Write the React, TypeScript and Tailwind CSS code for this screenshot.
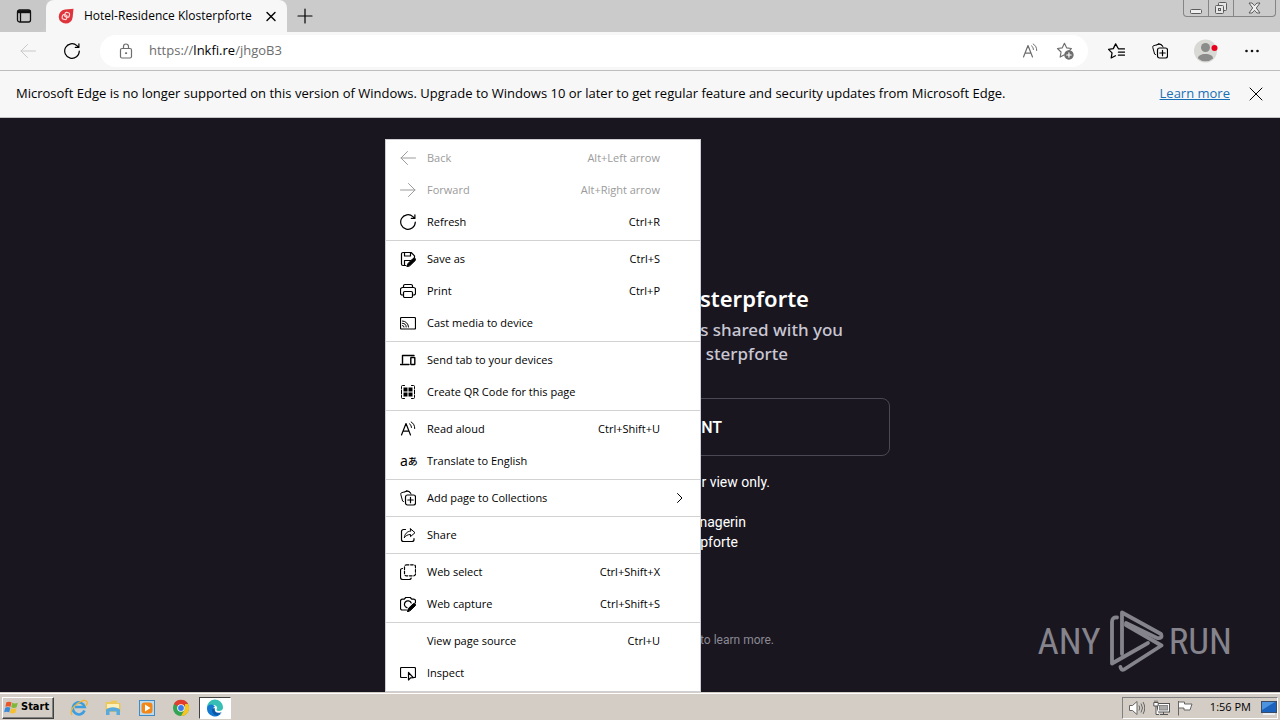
import React from "react";

const MENU_FONT = "font-['Open_Sans','Liberation_Sans',sans-serif]";

function Svg({ size = 16, className = "", children }: { size?: number; className?: string; children: React.ReactNode }) {
  return (
    <svg width={size} height={size} viewBox="0 0 16 16" fill="none" stroke="currentColor" strokeWidth="1" strokeLinecap="round" strokeLinejoin="round" aria-hidden="true" className={"shrink-0 " + className}>
      {children}
    </svg>
  );
}

const icons = {
  back: <path d="M7.500 1.500L1 8l6.500 6.500M1 8h14.500" />,
  forward: <path d="M8.500 1.500L15 8l-6.500 6.500M15 8H.5" />,
  refresh: <path d="M15.300 8A7.300 7.300 0 1 1 12.900 2.600l1.900 1.700M14.900.8v3.600h-3.600" strokeWidth="1.200" />,
  save: (
    <>
      <path d="M6 14.500H3a1.500 1.500 0 0 1-1.500-1.500V3A1.500 1.500 0 0 1 3 1.500h8.200L14.500 4.800V6.500M4.500 1.500V5h6V1.500M4.500 14V9.500h6" strokeWidth="1.200" />
      <path d="M7 15.500l1-3L13 7.500a1.400 1.400 0 0 1 2.200 2.100L10 14.600z" fill="currentColor" />
    </>
  ),
  print: (
    <>
      <path d="M3.500 12H2.300A1.800 1.800 0 0 1 .5 10.200V6.500a2 2 0 0 1 2-2h11a2 2 0 0 1 2 2v3.700a1.800 1.800 0 0 1-1.800 1.800h-1.200M3.500 4.500V3A1.500 1.500 0 0 1 5 1.500h6A1.500 1.500 0 0 1 12.500 3v1.500" strokeWidth="1.200" />
      <rect x="3.500" y="8.500" width="9" height="6" rx="1.200" strokeWidth="1.200" />
    </>
  ),
  cast: (
    <>
      <rect x=".5" y="2.500" width="15" height="11.500" rx="1" strokeWidth="1.200" />
      <path d="M2.500 6a6 6 0 0 1 6 6M2.500 8.300A3.700 3.700 0 0 1 6.200 12M2.500 10.500A1.500 1.500 0 0 1 4 12" />
    </>
  ),
  send: (
    <>
      <path d="M2.500 11V3.500H14M.5 12.500h8.500" strokeWidth="1.400" />
      <rect x="10.800" y="5.500" width="4" height="7" rx=".5" strokeWidth="1.400" />
    </>
  ),
  qr: (
    <>
      <path d="M1.500 4.500V2.500a1 1 0 0 1 1-1h2M11.500 1.500h2a1 1 0 0 1 1 1v2M14.500 11.500v2a1 1 0 0 1-1 1h-2M4.500 14.500h-2a1 1 0 0 1-1-1v-2M1.500 6v4M14.500 6v4" />
      <path d="M3.500 3.500h4v4h-4zM8.500 3.500h4v4h-4zM3.500 8.500h4v4h-4zM8.500 8.500h4v4h-4z" fill="currentColor" stroke="none" />
    </>
  ),
  read: (
    <>
      <path d="M1.500 14L6 2.500 10.500 14M3 10.200h6" strokeWidth="1.200" />
      <path d="M9.500 2.800a4 4 0 0 1 2 3.700M11.200 1a7 7 0 0 1 3.500 6.500" />
    </>
  ),
  collections: (
    <>
      <path d="M3.500 11.500L2.600 11.100 .8 4.500A1.500 1.500 0 0 1 1.900 2.600L7.500 1.100a1.500 1.500 0 0 1 1.900 1.200M5 2l1-1.300 4 1.300 1 2" />
      <rect x="5.500" y="5" width="10" height="10" rx="2" strokeWidth="1.200" />
      <path d="M10.500 7.300v5.400M7.800 10h5.400" strokeWidth="1.200" />
    </>
  ),
  share: (
    <>
      <path d="M5.500 2.500H3.500a2 2 0 0 0-2 2v8a2 2 0 0 0 2 2h8.500a2 2 0 0 0 2-2v-1" strokeWidth="1.200" />
      <path d="M10.500 1.800L15 5.700l-4.500 3.900V7.500C7.600 7.500 5.700 8.700 4.300 10.800c.4-3.600 2.500-6.500 6.200-6.700z" />
    </>
  ),
  select: (
    <>
      <path d="M2.500 4.500h-.2A1.800 1.800 0 0 0 .5 6.300v6.900a2.300 2.300 0 0 0 2.300 2.300h6.400a2 2 0 0 0 2-1.500" strokeWidth="1.200" />
      <rect x="4.500" y=".8" width="11" height="11" rx="1.800" strokeDasharray="2.600 1.700" strokeWidth="1.200" />
    </>
  ),
  capture: (
    <>
      <path d="M6.500 14H2.300A1.800 1.800 0 0 1 .5 12.200V5a1.800 1.800 0 0 1 1.800-1.800h2L5.700 1.500h4.600l1.400 1.700h2A1.800 1.800 0 0 1 15.500 5v1.500M7 11.700A3.500 3.500 0 1 1 11.200 7" strokeWidth="1.200" />
      <path d="M7.500 15.500l.8-3L13.300 7.700a1.300 1.300 0 0 1 2 2L10.300 14.500z" fill="currentColor" />
    </>
  ),
  inspect: (
    <>
      <path d="M6.500 12.500h-5a1 1 0 0 1-1-1V3.500a1 1 0 0 1 1-1h13a1 1 0 0 1 1 1v8a1 1 0 0 1-1 1h-1" strokeWidth="1.200" />
      <path d="M8.500 7.500v7.500l2-2.200 2.800-.1z" strokeWidth="1.200" />
    </>
  ),
};

type Item = { label: string; icon?: React.ReactNode; keys?: string; disabled?: boolean; sub?: boolean };

const groups: Item[][] = [
  [
    { label: "Back", icon: <Svg>{icons.back}</Svg>, keys: "Alt+Left arrow", disabled: true },
    { label: "Forward", icon: <Svg>{icons.forward}</Svg>, keys: "Alt+Right arrow", disabled: true },
    { label: "Refresh", icon: <Svg>{icons.refresh}</Svg>, keys: "Ctrl+R" },
  ],
  [
    { label: "Save as", icon: <Svg>{icons.save}</Svg>, keys: "Ctrl+S" },
    { label: "Print", icon: <Svg>{icons.print}</Svg>, keys: "Ctrl+P" },
    { label: "Cast media to device", icon: <Svg>{icons.cast}</Svg> },
  ],
  [
    { label: "Send tab to your devices", icon: <Svg>{icons.send}</Svg> },
    { label: "Create QR Code for this page", icon: <Svg>{icons.qr}</Svg> },
  ],
  [
    { label: "Read aloud", icon: <Svg>{icons.read}</Svg>, keys: "Ctrl+Shift+U" },
    { label: "Translate to English", icon: <span className="flex items-center whitespace-nowrap font-['Noto_Sans','Noto_Sans_CJK_JP',sans-serif] text-[14px] leading-4"><span>a</span><span className="text-[10px] font-medium">あ</span></span> },
  ],
  [{ label: "Add page to Collections", icon: <Svg>{icons.collections}</Svg>, sub: true }],
  [{ label: "Share", icon: <Svg>{icons.share}</Svg> }],
  [
    { label: "Web select", icon: <Svg>{icons.select}</Svg>, keys: "Ctrl+Shift+X" },
    { label: "Web capture", icon: <Svg>{icons.capture}</Svg>, keys: "Ctrl+Shift+S" },
  ],
  [
    { label: "View page source", keys: "Ctrl+U" },
    { label: "Inspect", icon: <Svg>{icons.inspect}</Svg> },
  ],
];

function ContextMenu() {
  return (
    <div role="menu" className={"absolute left-[385px] top-[21px] z-10 w-[316px] border border-[#cfcfd3] bg-white py-0.5 text-[11px] text-black " + MENU_FONT}>
      {groups.map((group, g) => (
        <div key={g} className={g > 0 ? "mt-0.5 border-t border-[#d2d2d2] pt-0.5" : ""}>
          {group.map((item) => (
            <button key={item.label} role="menuitem" disabled={item.disabled} className={"flex h-8 w-full items-center pl-3.5 pr-2 text-left " + (item.disabled ? "text-[#9b9b9b]" : "")}>
              <span className="flex w-[27px] shrink-0">{item.icon}</span>
              <span className="flex-1">{item.label}</span>
              <span>{item.keys}</span>
              <span className="flex w-8 shrink-0 justify-end pr-1">
                {item.sub && (
                  <Svg>
                    <path d="M5.500 3.500L10 8l-4.500 4.500" />
                  </Svg>
                )}
              </span>
            </button>
          ))}
        </div>
      ))}
    </div>
  );
}

function TitleBar() {
  return (
    <div className="flex h-8 items-stretch bg-[#cbcbcb]">
      <button aria-label="Tab actions" className="flex w-[46px] items-center justify-center rounded-br-lg bg-[#c8c8c8]">
        <svg width="16" height="16" viewBox="0 0 16 16" fill="none" stroke="#111" strokeWidth="1.300" className="ml-0.5">
          <rect x="1.500" y="2" width="13" height="12" rx="2" />
          <path d="M1.500 3.700h13" strokeWidth="3" />
          <path d="M4.500 5v9" />
        </svg>
      </button>
      <div className="flex w-[241px] items-center rounded-t-lg bg-[#f7f7f7] pl-3 pr-2">
        <svg width="16" height="16" viewBox="0 0 16 16" className="mr-2.5 shrink-0">
          <path d="M15.500.8L14.700 9A7 7 0 1 1 7 1.600z" fill="#e0343c" />
          <g fill="none" stroke="#ffd9d9" strokeWidth="1.200">
            <rect x="6.800" y="4.500" width="4.600" height="4.600" rx="1.500" transform="rotate(12 9 7)" />
            <rect x="4.300" y="6.900" width="4.600" height="4.600" rx="1.500" transform="rotate(12 7 9)" />
          </g>
        </svg>
        <span className="flex-1 whitespace-nowrap text-[12px] text-black">Hotel-Residence Klosterpforte</span>
        <button aria-label="Close tab" className="text-black">
          <Svg>
            <path d="M4 4.500l8 8M12 4.500l-8 8" strokeWidth="1.400" />
          </Svg>
        </button>
      </div>
      <button aria-label="New tab" className="flex w-9 items-center justify-center text-black">
        <Svg>
          <path d="M8 1v14M1 8h14" strokeWidth="1.200" />
        </Svg>
      </button>
      <div className="flex-1" />
      <div className="mr-1 flex h-[17px] rounded-b-[4px] border border-t-0 border-[#858585] text-[#5c5c5c]">
        <button aria-label="Minimize" className="flex w-[25px] items-end justify-center border-r border-[#858585] pb-0.5">
          <svg width="12" height="5" viewBox="0 0 12 5" fill="#eee" stroke="currentColor"><rect x=".5" y=".5" width="11" height="4" rx="1" /></svg>
        </button>
        <button aria-label="Restore" className="flex w-[25px] items-center justify-center border-r border-[#858585]">
          <svg width="14" height="14" viewBox="0 0 14 14" fill="#e6e6e6" stroke="currentColor">
            <rect x="4.500" y="1.500" width="8" height="8" rx="1" />
            <rect x="1.500" y="4.500" width="8" height="8" rx="1" />
            <rect x="4.500" y="7.500" width="2" height="2" />
          </svg>
        </button>
        <button aria-label="Close window" className="flex w-[41px] items-center justify-center">
          <svg width="13" height="12" viewBox="0 0 13 12" fill="#eee" stroke="currentColor">
            <path d="M1 1h3l2.500 2.700L9 1h3L8.300 6l3.700 5H9L6.500 8.300 4 11H1l3.700-5z" />
          </svg>
        </button>
      </div>
    </div>
  );
}

const STAR = "M7.500 1.200l1.900 4 4.300.6-3.100 3.100M7.500 1.200l-1.900 4-4.300.6 3.200 3.100-.8 4.500 3.400-1.900";

function Toolbar() {
  return (
    <div className="flex h-[39px] items-center border-b border-[#bdbdbd] bg-[#f7f7f7] text-[#222]">
      <button aria-label="Back" disabled className="ml-5 text-[#c9c9c9]"><Svg>{icons.back}</Svg></button>
      <button aria-label="Refresh page" className="ml-7 text-black"><Svg>{icons.refresh}</Svg></button>
      <div className="ml-5 flex h-8 flex-1 items-center rounded-full bg-white pl-[18px] pr-3.5 text-[#6d6d6d]">
        <Svg>
          <rect x="2.500" y="5.500" width="11" height="9.500" rx="1.500" strokeWidth="1.200" />
          <path d="M5.500 5.500V3.500a2.500 2.500 0 0 1 5 0v2" strokeWidth="1.200" />
          <circle cx="8" cy="10.200" r=".6" fill="currentColor" />
        </Svg>
        <a href="https://lnkfi.re/jhgoB3" className="ml-[15px] flex-1 text-[13px]">
          https://<span className="text-black">lnkfi.re</span>/jhgoB3
        </a>
        <button aria-label="Read aloud"><Svg>{icons.read}</Svg></button>
        <button aria-label="Add to favorites" className="ml-[18px]">
          <Svg size={18}>
            <path d={STAR} />
            <circle cx="11.500" cy="11.500" r="3.700" fill="currentColor" />
            <path d="M11.500 9.500v4M9.500 11.500h4" stroke="#fff" />
          </Svg>
        </button>
      </div>
      <div className="ml-5 mr-5 flex items-center text-black">
        <button aria-label="Favorites">
          <Svg size={17}><path d="M9.500 5L7.200.8 5 5.300.5 6l3.300 3.300-.8 4.800L7 12M9.800 5.500h5.700M9.800 8.500h5.700M9.800 11.500h5.700" strokeWidth="1.200" /></Svg>
        </button>
        <button aria-label="Collections" className="ml-[27px]"><Svg>{icons.collections}</Svg></button>
        <button aria-label="Profile" className="ml-[26px]">
          <svg width="24" height="24" viewBox="0 0 24 24">
            <circle cx="11.500" cy="12" r="11.500" fill="#d8d8d5" />
            <circle cx="11.500" cy="8.500" r="4.500" fill="#8b8b8b" />
            <path d="M4 19.500c0-3 3-4.500 7.500-4.500s7.500 1.500 7.500 4.500a11.300 11.300 0 0 1-15 0z" fill="#8b8b8b" />
            <circle cx="20.500" cy="9" r="3" fill="#e8001c" />
          </svg>
        </button>
        <button aria-label="Settings and more" className="ml-[26px]">
          <svg width="16" height="16" viewBox="0 0 16 16" fill="#111">
            <circle cx="2.500" cy="8" r="1.300" />
            <circle cx="8" cy="8" r="1.300" />
            <circle cx="13.500" cy="8" r="1.300" />
          </svg>
        </button>
      </div>
    </div>
  );
}

function InfoBar() {
  return (
    <div className="flex h-[47px] items-center border-b border-[#c4c4c4] bg-[#f7f7f7] pl-4 pr-4 text-[13px] text-black">
      <p className="flex-1 whitespace-nowrap">
        Microsoft Edge is no longer supported on this version of Windows. Upgrade to Windows 10 or later to get regular feature and security updates from Microsoft Edge.
      </p>
      <a href="#learn-more" className="text-[#1a6fb5] underline">Learn more</a>
      <button aria-label="Dismiss" className="ml-[18px]"><Svg><path d="M2 2l12 12M14 2L2 14" /></Svg></button>
    </div>
  );
}

function Watermark() {
  return (
    <div className="absolute bottom-5 right-12 flex items-center text-[#85838b]">
      <span className="font-['Roboto_Condensed','Liberation_Sans_Narrow','Roboto',sans-serif] text-[37px] leading-none">ANY</span>
      <svg width="56" height="62" viewBox="0 0 56 62" fill="none" stroke="currentColor" strokeWidth="3.800" strokeLinejoin="round" strokeLinecap="round" className="ml-2 mr-1">
        <path d="M8 7.500Q3 7 3 12v41.500L39 33" />
        <path d="M13 44V2.500L52 24q2 5-4 4L17 13" />
        <path d="M17 15l35.500 20.500L15 59.500q-3 1-3.500-2.500" />
      </svg>
      <span className="font-['Roboto_Condensed','Liberation_Sans_Narrow','Roboto',sans-serif] text-[37px] leading-none">RUN</span>
    </div>
  );
}

function Page() {
  return (
    <main className="relative flex flex-1 justify-center bg-[#191620] pr-1 text-right font-['Roboto','Noto_Sans',sans-serif] text-white">
      <div className="w-[504px] pt-[164px]">
        <h1 className="pr-[81px] font-['Noto_Sans',sans-serif] text-[22px] font-semibold leading-8">sterpforte</h1>
        <p className="pr-[47px] pt-1 font-['Noto_Sans',sans-serif] text-[17px] font-medium leading-6 text-[#c9c7d3]">s shared with you</p>
        <p className="pr-[102px] font-['Noto_Sans',sans-serif] text-[17px] font-medium leading-6 text-[#c9c7d3]">sterpforte</p>
        <button className="mt-8 block h-[58px] w-full rounded-lg border border-[#4a4852] pr-[167px] pt-0.5 text-right text-[16px] font-medium">NT</button>
        <p className="pr-[120px] pt-4 text-[14px] leading-5">r view only.</p>
        <p className="pr-[144px] pt-5 text-[14px] leading-5">nagerin</p>
        <p className="pr-[152px] text-[14px] leading-5">pforte</p>
        <p className="pr-[116px] pt-[78px] text-[12px] leading-5 text-[#8b8993]">to learn more.</p>
      </div>
      <ContextMenu />
      <Watermark />
    </main>
  );
}

function Taskbar() {
  return (
    <footer className="flex h-7 items-center border-t border-[#d4cdc5] bg-[#d4cdc5] pb-0.5 pl-0.5 pr-0.5 text-[11px] text-black shadow-[inset_0_1px_0_#fff]">
      <button className="mt-1 flex h-[22px] w-[52px] items-center gap-0.5 whitespace-nowrap border border-b-[#404040] border-l-white border-r-[#404040] border-t-white pl-px font-['DejaVu_Sans_Condensed','DejaVu_Sans',sans-serif] text-[11px] font-bold shadow-[inset_-1px_-1px_0_#808080]">
        <svg width="15" height="15" viewBox="0 0 16 16" className="shrink-0">
          <path d="M2.500 2.500q2.500-1.500 5.500 0L7 7.300q-2.700-1.400-5.500 0z" fill="#e8562a" />
          <path d="M8.700 3q2.800 1.300 6 0l-1.200 4.800q-3 1.300-5.800 0z" fill="#7fb83a" />
          <path d="M1.300 8.200q2.700-1.400 5.500 0l-1.200 4.900q-2.700-1.400-5.500 0z" fill="#3b8ad8" />
          <path d="M7.500 8.700q2.800 1.300 5.800 0l-1.200 4.900q-3 1.300-5.800 0z" fill="#f5bf2e" />
        </svg>
        Start
      </button>
      <nav aria-label="Pinned programs" className="ml-4 mt-1 flex items-center">
        <button aria-label="Internet Explorer" className="w-[34px]">
          <svg width="18" height="18" viewBox="0 0 18 18" fill="none">
            <path d="M14.500 11.500a6 6 0 1 1 .2-3.500H5" stroke="#3b9ee0" strokeWidth="2.600" />
            <path d="M2 16Q-1 11 7 5t10-2q1 1-1.500 4" stroke="#edb53a" strokeWidth="1.300" />
          </svg>
        </button>
        <button aria-label="File Explorer" className="w-[34px]">
          <svg width="18" height="18" viewBox="0 0 18 18">
            <path d="M1.500 3h5l1-1.500H13V4h3.500v9h-15z" fill="#ecc75c" />
            <path d="M3 5h12v4H3z" fill="#fbf0bb" />
            <path d="M2 10.500q7-4.500 14 0V16h-3.500v-3.500h-7V16H2z" fill="#58aade" />
          </svg>
        </button>
        <button aria-label="Media Player" className="w-[34px]">
          <svg width="18" height="18" viewBox="0 0 18 18">
            <rect x="1.500" y="1.500" width="15" height="15" fill="#bcdaf0" stroke="#3f8bc4" />
            <rect x="3.500" y="3.500" width="11" height="11" rx="3" fill="#f28718" />
            <path d="M7 5.500v7L12.500 9z" fill="#fff" />
          </svg>
        </button>
        <button aria-label="Chrome" className="w-[34px]">
          <svg width="18" height="18" viewBox="0 0 18 18">
            <circle cx="9" cy="9" r="8" fill="#34a353" />
            <path d="M9 9L2 5A8 8 0 0 1 16 5z" fill="#e33b2e" />
            <path d="M9 17l4-7V5h3A8 8 0 0 1 9 17z" fill="#f9c51c" />
            <circle cx="9" cy="9" r="3.800" fill="#fff" />
            <circle cx="9" cy="9" r="2.900" fill="#3e79e8" />
          </svg>
        </button>
      </nav>
      <button aria-label="Microsoft Edge" className="-ml-[7px] mt-1 flex h-[22px] w-8 items-center justify-center border border-b-white border-l-[#404040] border-r-white border-t-[#404040] bg-white">
        <svg width="18" height="18" viewBox="0 0 18 18">
          <path d="M1 9A8 8 0 0 1 17 8c.2 3-2 4-4.500 4-2 0-2.500-1-1.500-2.500S9 5.500 6.500 6 2 7.500 1 9z" fill="#38bfb5" />
          <path d="M1 9c.5-4 6-5 8-1-3 0-3.500 6 1.500 7.300 1.700.4 3.500 0 5-1.300A8 8 0 0 1 1 9z" fill="#1378d0" />
          <path d="M6.500 9.500C5 12 7 16 11 16.700A8 8 0 0 0 15.700 13c-4 2-7.500.5-7-4z" fill="#0c57a8" />
        </svg>
      </button>
      <div className="flex-1" />
      <div className="mt-1 flex h-[22px] items-center border border-b-white border-l-[#808080] border-r-white border-t-[#808080] pl-1.5">
        <svg width="16" height="16" viewBox="0 0 16 16" fill="#fff" stroke="#666" className="mr-2">
          <path d="M.5 5.500h3L8 1.500v13L3.500 10.500h-3z" />
          <path d="M10 5.500q1.500 2.500 0 5M12 3.500q3 4.500 0 9M14 2q3.500 6 0 12" fill="none" />
        </svg>
        <svg width="18" height="16" viewBox="0 0 18 16" fill="#fff" stroke="#555" className="mr-1.5">
          <rect x="4.500" y="3.500" width="12" height="8.500" />
          <rect x="6.500" y="5.500" width="8" height="4.500" fill="#aaa" stroke="#888" />
          <path d="M7 14.500h8M10.500 12v2.500M3 6v8.500h3" />
          <path d="M.8 2.500h4.400v3.500H.8zM2 2.500V.5M4 2.500V.5" />
        </svg>
        <svg width="17" height="16" viewBox="0 0 17 16" fill="#fff" stroke="#666" className="mr-4">
          <path d="M1.500 15.500V1M1.500 2h6v2h7.500l-2 6H7V8H1.500" />
        </svg>
        <time className="mr-2.5 whitespace-nowrap">1:56 PM</time>
        <svg width="16" height="14" viewBox="0 0 16 14">
          <rect x=".5" y=".5" width="15" height="11" fill="#1b62bd" stroke="#3b4d65" />
          <path d="M1 1h13L1 9z" fill="#4c94df" />
          <path d="M2 13h12" stroke="#e9eef4" strokeWidth="2" />
        </svg>
      </div>
    </footer>
  );
}

export default function App() {
  return (
    <div className="flex min-h-screen flex-col overflow-hidden bg-[#191620] font-['Open_Sans','Noto_Sans',sans-serif]">
      <TitleBar />
      <Toolbar />
      <InfoBar />
      <Page />
      <Taskbar />
    </div>
  );
}
